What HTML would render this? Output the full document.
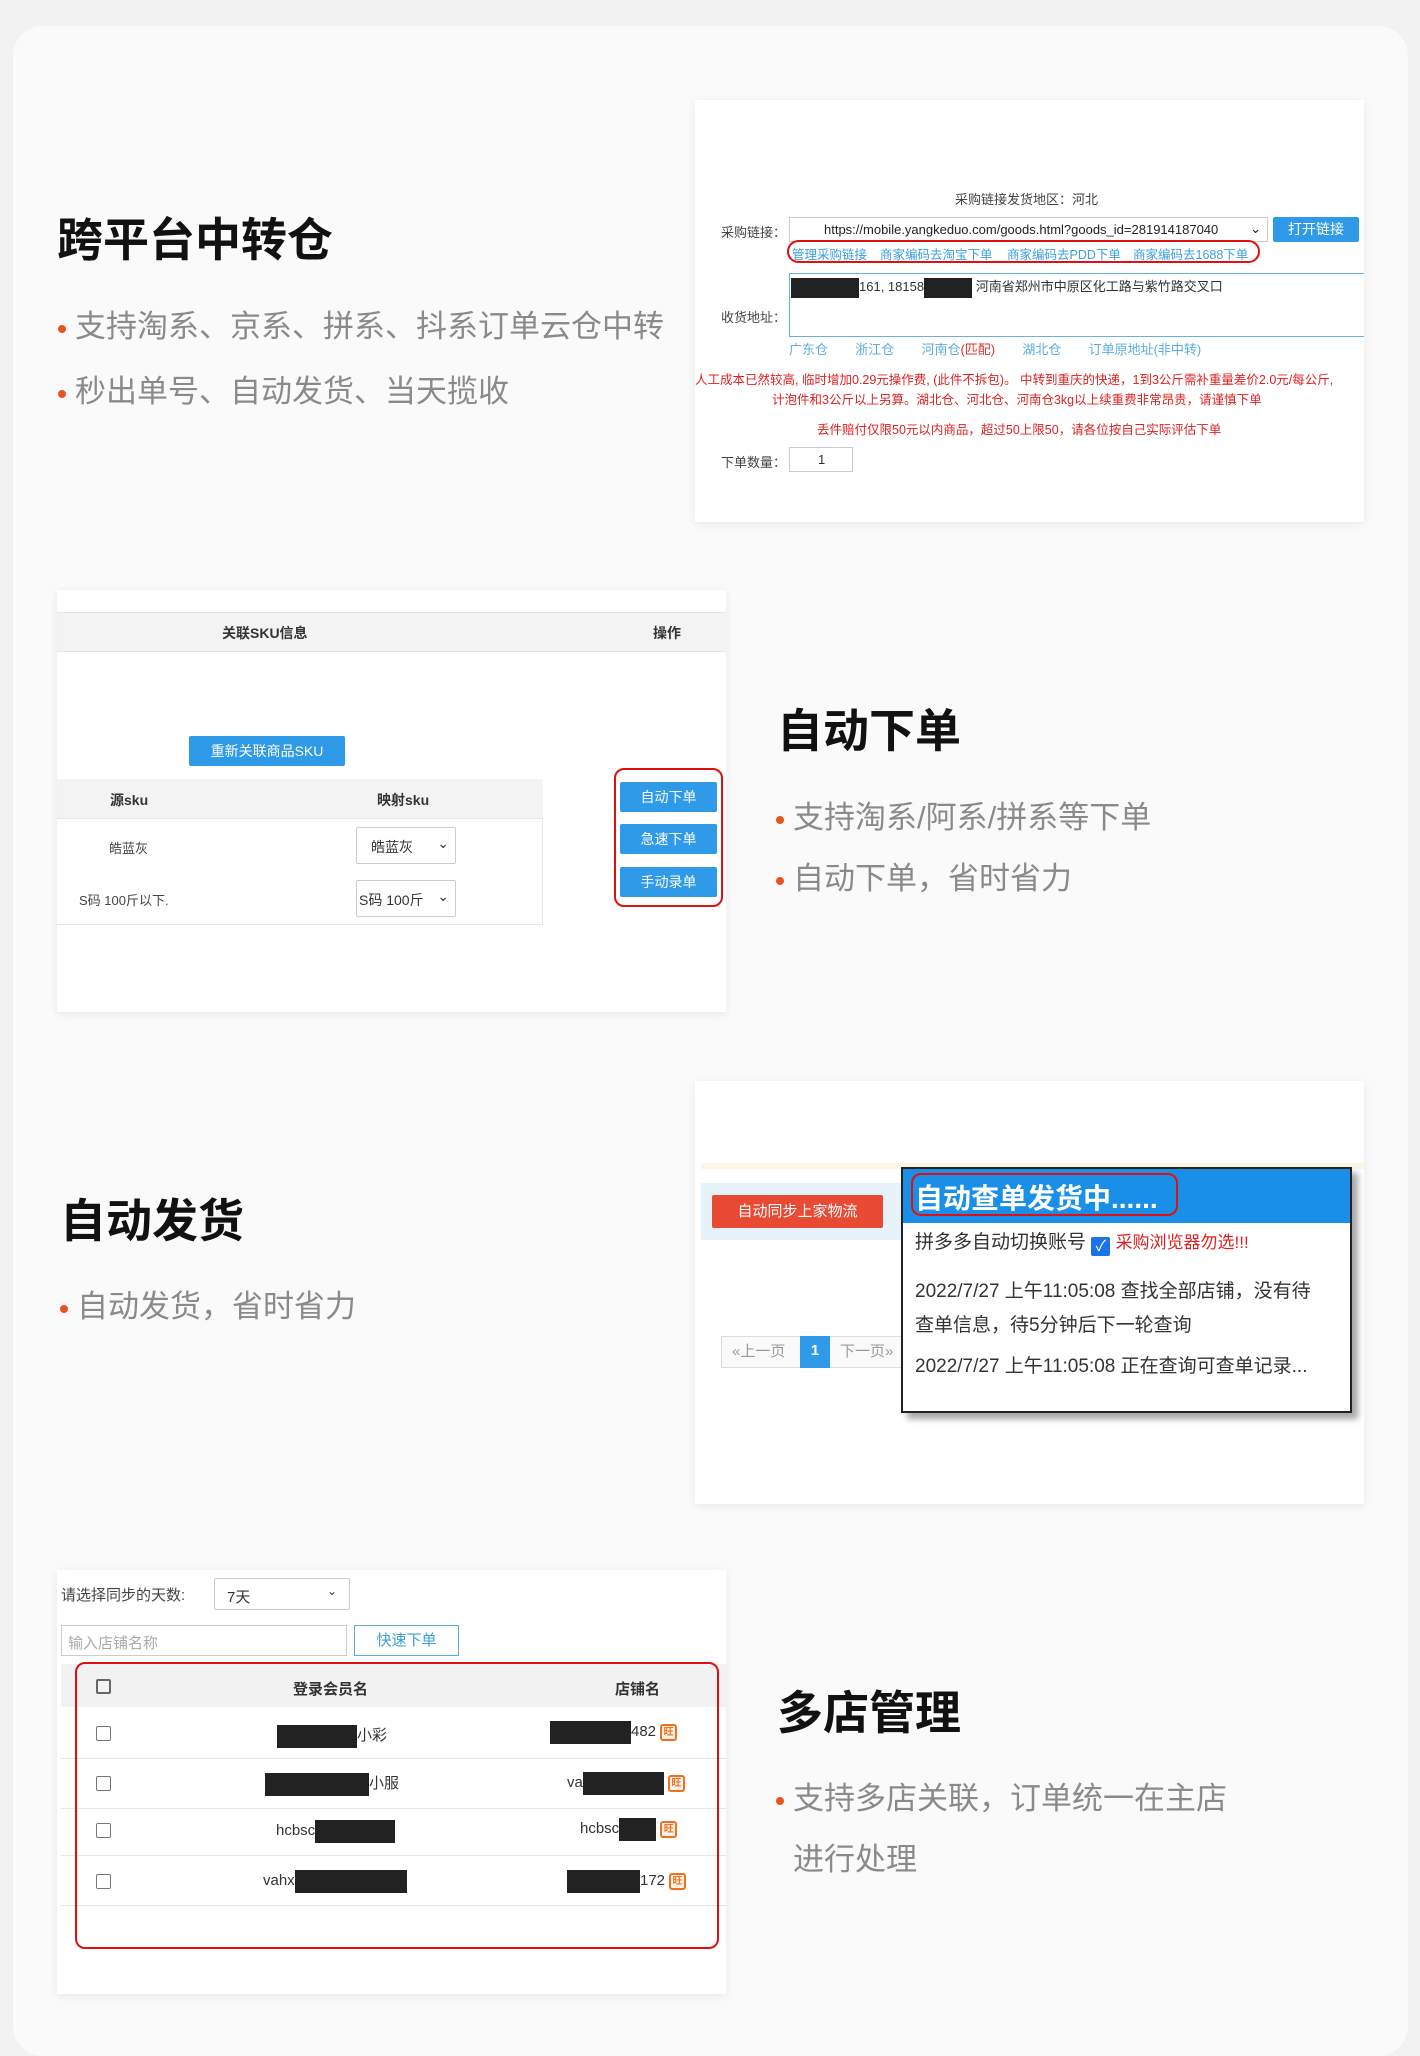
<!DOCTYPE html>
<html><head><meta charset="utf-8">
<style>
*{margin:0;padding:0;box-sizing:border-box}
body{width:1420px;height:2030px;background:#f2f2f2;font-family:"Liberation Sans","Noto Sans CJK SC",sans-serif;position:relative;overflow:hidden}
.card{position:absolute;left:13px;top:26px;width:1395px;height:2030px;background:#fafafa;border-radius:30px}
.a{position:absolute;white-space:nowrap}
.box{position:absolute;background:#fff;box-shadow:0 2px 8px rgba(0,0,0,.08);overflow:hidden}
h2{position:absolute;font-size:46px;font-weight:bold;color:#111;line-height:1;white-space:nowrap}
.b{position:absolute;font-size:31px;color:#8a8a8a;line-height:1;white-space:nowrap}
.b::before{content:"";position:absolute;left:-17px;top:14px;width:8px;height:8px;border-radius:50%;background:#e8541e}
.b.nb::before{display:none}
.btn{position:absolute;background:#2f9ae8;color:#fff;text-align:center;border-radius:2px}
.s{font-size:13px;color:#444}
.blk{display:inline-block;background:#222;vertical-align:middle}
.sel{position:absolute;border:1px solid #ccc;border-radius:2px;background:#fff;font-size:14px;color:#333}
.chk{position:absolute;width:15px;height:15px;border:2px solid #666;border-radius:2px}
.lk{position:absolute;top:144px;font-size:12.5px;color:#3a9fe0;white-space:nowrap}
.w{display:inline-block;width:17px;height:17px;border:2px solid #f07020;background:#fff3e8;color:#f07020;font-size:10px;line-height:13px;text-align:center;font-weight:bold;border-radius:3px;vertical-align:middle;margin-left:4px}
</style></head><body>
<div class="card"></div>

<!-- Section 1 -->
<h2 style="left:57px;top:217px">跨平台中转仓</h2>
<div class="b" style="left:75px;top:311px">支持淘系、京系、拼系、抖系订单云仓中转</div>
<div class="b" style="left:75px;top:376px">秒出单号、自动发货、当天揽收</div>

<div class="box" style="left:695px;top:100px;width:669px;height:422px">
 <div class="a s" style="left:260px;top:89px;font-size:13px">采购链接发货地区：河北</div>
 <div class="a s" style="left:26px;top:122px">采购链接：</div>
 <div class="a" style="left:94px;top:117px;width:479px;height:25px;border:1px solid #ccc;font-size:13px;color:#222;padding:4px 0 0 34px">https://mobile.yangkeduo.com/goods.html?goods_id=281914187040<span style="position:absolute;right:6px;top:3px">&#8964;</span></div>
 <div class="btn" style="left:578px;top:117px;width:86px;height:25px;font-size:14px;line-height:25px">打开链接</div>
 <div class="a" style="left:92px;top:140px;width:473px;height:23px;border:2px solid #e01010;border-radius:12px"></div>
 <div class="lk" style="left:97px">管理采购链接</div>
 <div class="lk" style="left:185px">商家编码去淘宝下单</div>
 <div class="lk" style="left:312px">商家编码去PDD下单</div>
 <div class="lk" style="left:438px">商家编码去1688下单</div>
 <div class="a" style="left:94px;top:173px;width:580px;height:64px;border:1px solid #6ab0e0"></div>
 <div class="a" style="left:96px;top:176px;font-size:13px;color:#333"><span class="blk" style="width:68px;height:20px"></span>161, 18158<span class="blk" style="width:48px;height:20px"></span> 河南省郑州市中原区化工路与紫竹路交叉口</div>
 <div class="a s" style="left:26px;top:207px">收货地址：</div>
 <div class="a" style="left:94px;top:239px;font-size:13px;color:#5aaee0;word-spacing:10px">广东仓 &nbsp;浙江仓 &nbsp;河南仓<span style="color:#e03030">(匹配)</span> &nbsp;湖北仓 &nbsp;订单原地址(非中转)</div>
 <div class="a" style="left:0;top:269px;font-size:12.5px;color:#e02020">人工成本已然较高, 临时增加0.29元操作费, (此件不拆包)。 中转到重庆的快递，1到3公斤需补重量差价2.0元/每公斤,</div>
 <div class="a" style="left:77px;top:289px;font-size:12.5px;color:#e02020">计泡件和3公斤以上另算。湖北仓、河北仓、河南仓3kg以上续重费非常昂贵，请谨慎下单</div>
 <div class="a" style="left:122px;top:319px;font-size:12.5px;color:#e02020">丢件赔付仅限50元以内商品，超过50上限50，请各位按自己实际评估下单</div>
 <div class="a s" style="left:26px;top:352px">下单数量：</div>
 <div class="a" style="left:94px;top:347px;width:64px;height:25px;border:1px solid #ccc;font-size:13px;padding:4px 0 0 28px;color:#333">1</div>
</div>

<!-- Section 2 -->
<div class="box" style="left:57px;top:590px;width:669px;height:422px">
 <div class="a" style="left:0;top:22px;width:669px;height:40px;background:#f3f3f3;border-top:1px solid #e6e6e6;border-bottom:1px solid #e6e6e6"></div>
 <div class="a" style="left:165px;top:33px;font-size:14px;font-weight:bold;color:#333">关联SKU信息</div>
 <div class="a" style="left:596px;top:33px;font-size:14px;font-weight:bold;color:#333">操作</div>
 <div class="btn" style="left:132px;top:146px;width:156px;height:30px;line-height:30px;font-size:14px">重新关联商品SKU</div>
 <div class="a" style="left:0;top:189px;width:486px;height:146px;border:1px solid #e6e6e6;border-left:none"></div>
 <div class="a" style="left:0;top:189px;width:486px;height:40px;background:#f3f3f3;border-bottom:1px solid #e6e6e6"></div>
 <div class="a" style="left:53px;top:200px;font-size:14px;font-weight:bold;color:#333">源sku</div>
 <div class="a" style="left:320px;top:200px;font-size:14px;font-weight:bold;color:#333">映射sku</div>
 <div class="a s" style="left:52px;top:248px">皓蓝灰</div>
 <div class="a s" style="left:22px;top:300px">S码 100斤以下.</div>
 <div class="sel" style="left:299px;top:237px;width:100px;height:37px;padding:9px 0 0 14px">皓蓝灰<span style="position:absolute;right:6px;top:7px">&#8964;</span></div>
 <div class="sel" style="left:299px;top:290px;width:100px;height:37px;padding:9px 0 0 2px">S码 100斤<span style="position:absolute;right:6px;top:7px">&#8964;</span></div>
 <div class="a" style="left:557px;top:178px;width:109px;height:139px;border:2px solid #e01010;border-radius:10px"></div>
 <div class="btn" style="left:563px;top:192px;width:97px;height:30px;line-height:30px;font-size:14px">自动下单</div>
 <div class="btn" style="left:563px;top:234px;width:97px;height:30px;line-height:30px;font-size:14px">急速下单</div>
 <div class="btn" style="left:563px;top:277px;width:97px;height:30px;line-height:30px;font-size:14px">手动录单</div>
</div>
<h2 style="left:777px;top:708px">自动下单</h2>
<div class="b" style="left:793px;top:802px">支持淘系/阿系/拼系等下单</div>
<div class="b" style="left:793px;top:863px">自动下单，省时省力</div>

<!-- Section 3 -->
<h2 style="left:60px;top:1198px">自动发货</h2>
<div class="b" style="left:77px;top:1291px">自动发货，省时省力</div>
<div class="box" style="left:695px;top:1081px;width:669px;height:423px">
 <div class="a" style="left:6px;top:82px;width:663px;height:6px;background:#faf6e6"></div>
 <div class="a" style="left:6px;top:102px;width:210px;height:57px;background:#e8f2fa"></div>
 <div class="a" style="left:17px;top:114px;width:171px;height:33px;background:#e84a33;color:#fff;font-size:15px;line-height:33px;text-align:center;border-radius:2px">自动同步上家物流</div>
 <div class="a" style="left:26px;top:255px;width:190px;height:32px;border:1px solid #ddd;background:#fafafa;font-size:15px;color:#999;line-height:30px">
  <span style="position:absolute;left:10px">«上一页</span>
  <span style="position:absolute;left:78px;top:-1px;width:30px;height:32px;background:#2f9ae8;color:#fff;text-align:center;font-weight:bold">1</span>
  <span style="position:absolute;left:118px">下一页»</span></div>
 <div class="a" style="left:206px;top:86px;width:451px;height:246px;border:2px solid #222;background:#fff;box-shadow:6px 6px 6px rgba(0,0,0,.35)">
  <div class="a" style="left:0;top:0;width:447px;height:54px;background:#1a8fe8"></div>
  <div class="a" style="left:8px;top:4px;width:267px;height:43px;border:2px solid #e01010;border-radius:10px"></div>
  <div class="a" style="left:12px;top:8px;font-size:28px;font-weight:bold;color:#fff">自动查单发货中......</div>
  <div class="a" style="left:12px;top:58px;font-size:19px;color:#333">拼多多自动切换账号 <span style="display:inline-block;width:19px;height:19px;background:#1a73e8;color:#fff;font-size:15px;line-height:19px;text-align:center;border-radius:2px;vertical-align:-3px">✓</span> <span style="color:#e02020;font-size:17px">采购浏览器勿选!!!</span></div>
  <div class="a" style="left:12px;top:107px;font-size:19px;color:#333">2022/7/27 上午11:05:08 查找全部店铺，没有待</div>
  <div class="a" style="left:12px;top:141px;font-size:19px;color:#333">查单信息，待5分钟后下一轮查询</div>
  <div class="a" style="left:12px;top:182px;font-size:19px;color:#333">2022/7/27 上午11:05:08 正在查询可查单记录...</div>
 </div>
</div>

<!-- Section 4 -->
<div class="box" style="left:57px;top:1570px;width:669px;height:424px">
 <div class="a" style="left:4px;top:14px;font-size:15px;color:#444">请选择同步的天数:</div>
 <div class="sel" style="left:157px;top:8px;width:136px;height:32px;padding:7px 0 0 12px;font-size:15px">7天<span style="position:absolute;right:12px;top:5px;font-size:12px">&#8964;</span></div>
 <div class="a" style="left:4px;top:55px;width:286px;height:31px;border:1px solid #ccc;font-size:15px;color:#aaa;padding:6px 0 0 6px">输入店铺名称</div>
 <div class="a" style="left:297px;top:55px;width:105px;height:31px;border:1px solid #5ab0d0;font-size:15px;color:#3aa0d0;text-align:center;line-height:29px">快速下单</div>
 <div class="a" style="left:4px;top:94px;width:665px;height:43px;background:#f2f2f2"></div>
 <div class="a" style="left:4px;top:188px;width:665px;height:1px;background:#e6e6e6"></div>
 <div class="a" style="left:4px;top:238px;width:665px;height:1px;background:#e6e6e6"></div>
 <div class="a" style="left:4px;top:285px;width:665px;height:1px;background:#e6e6e6"></div>
 <div class="a" style="left:4px;top:335px;width:665px;height:1px;background:#e6e6e6"></div>
 <div class="chk" style="left:39px;top:109px"></div>
 <div class="chk" style="left:39px;top:156px;border-width:1.5px;border-color:#777"></div>
 <div class="chk" style="left:39px;top:206px;border-width:1.5px;border-color:#777"></div>
 <div class="chk" style="left:39px;top:253px;border-width:1.5px;border-color:#777"></div>
 <div class="chk" style="left:39px;top:304px;border-width:1.5px;border-color:#777"></div>
 <div class="a" style="left:236px;top:108px;font-size:15px;font-weight:bold;color:#333">登录会员名</div>
 <div class="a" style="left:558px;top:108px;font-size:15px;font-weight:bold;color:#333">店铺名</div>
 <div class="a" style="left:220px;top:154px;font-size:15px;color:#333;height:24px;line-height:24px"><span class="blk" style="width:80px;height:23px"></span>小彩</div>
 <div class="a" style="left:493px;top:150px;font-size:15px;color:#333;height:24px;line-height:24px"><span class="blk" style="width:81px;height:23px"></span>482<span class="w">旺</span></div>
 <div class="a" style="left:208px;top:202px;font-size:15px;color:#333;height:24px;line-height:24px"><span class="blk" style="width:104px;height:23px"></span>小服</div>
 <div class="a" style="left:510px;top:201px;font-size:15px;color:#333;height:24px;line-height:24px">va<span class="blk" style="width:81px;height:23px"></span><span class="w">旺</span></div>
 <div class="a" style="left:219px;top:249px;font-size:15px;color:#333;height:24px;line-height:24px">hcbsc<span class="blk" style="width:80px;height:23px"></span></div>
 <div class="a" style="left:523px;top:247px;font-size:15px;color:#333;height:24px;line-height:24px">hcbsc<span class="blk" style="width:37px;height:23px"></span><span class="w">旺</span></div>
 <div class="a" style="left:206px;top:299px;font-size:15px;color:#333;height:24px;line-height:24px">vahx<span class="blk" style="width:112px;height:23px"></span></div>
 <div class="a" style="left:510px;top:299px;font-size:15px;color:#333;height:24px;line-height:24px"><span class="blk" style="width:73px;height:23px"></span>172<span class="w">旺</span></div>
 <div class="a" style="left:18px;top:92px;width:644px;height:287px;border:2px solid #e01010;border-radius:10px"></div>
</div>
<h2 style="left:777px;top:1690px">多店管理</h2>
<div class="b" style="left:793px;top:1783px">支持多店关联，订单统一在主店</div>
<div class="b nb" style="left:793px;top:1844px;">进行处理</div>
</body></html>
